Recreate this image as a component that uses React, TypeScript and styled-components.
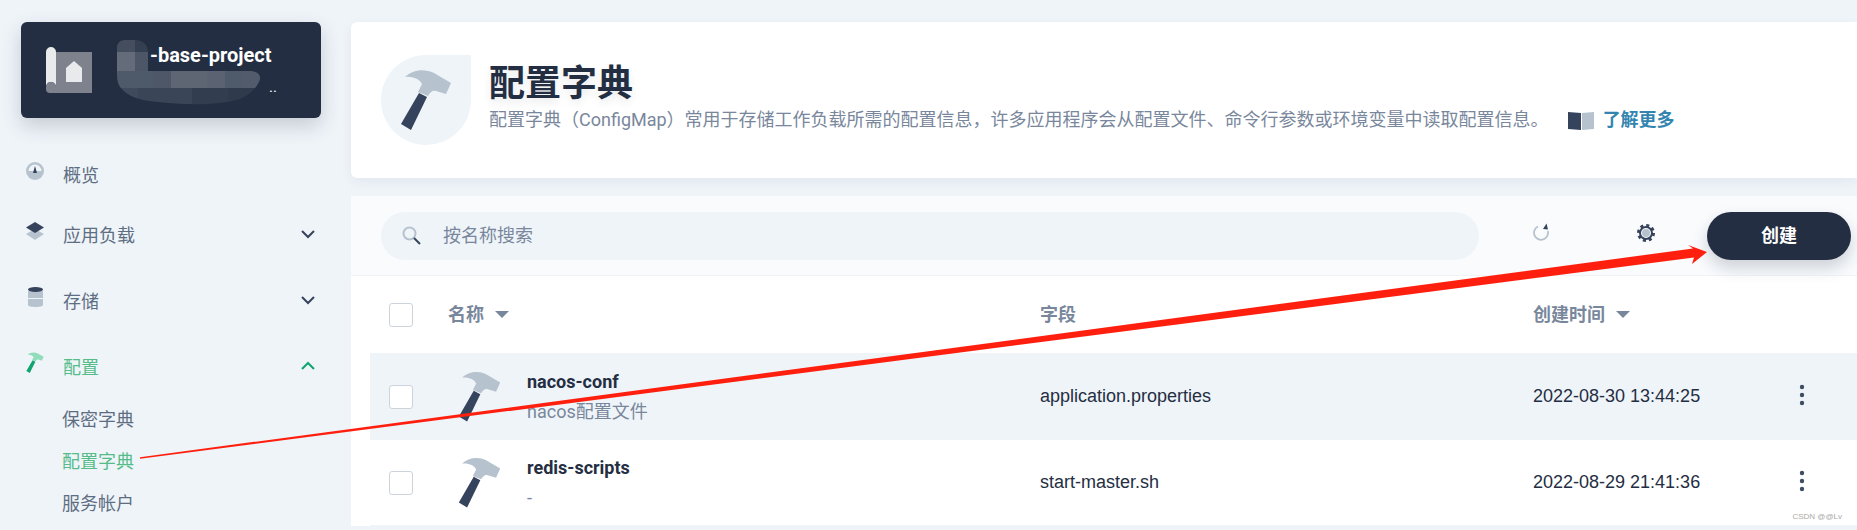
import { FC } from "react";
import styled, { createGlobalStyle } from "styled-components";

const CJK = `Roboto, "Noto Sans CJK SC", sans-serif`;
const ARIAL = `"Liberation Sans", "Noto Sans CJK SC", sans-serif`;

const Global = createGlobalStyle`
  html, body { margin: 0; padding: 0; background: #eff4f9; }
  body { width: 1857px; height: 530px; overflow: hidden; font-family: ${CJK}; }
  * { box-sizing: border-box; }
`;

const Page = styled.div`
  position: relative;
  display: flex;
  width: 1857px;
  height: 530px;
  overflow: hidden;
`;

const Sidebar = styled.aside`
  width: 351px;
  flex: none;
  padding: 22px 0 0 21px;
`;

const ProjectCard = styled.div`
  position: relative;
  display: flex;
  align-items: center;
  width: 300px;
  height: 96px;
  padding-left: 25px;
  border-radius: 6px;
  background: #242e42;
  box-shadow: 0 8px 20px rgba(36, 46, 66, 0.2);
`;

const ProjectText = styled.div`
  margin-left: 25px;
  color: #fff;
`;

const ProjectName = styled.div`
  margin-left: 33px;
  font-size: 20px;
  font-weight: 700;
  line-height: 24px;
  margin-top: -1px;
`;

const ProjectDesc = styled.div`
  margin-top: 10px;
  width: 160px;
  font-size: 15px;
  line-height: 20px;
  text-align: right;
`;

const Mosaic = styled.svg`
  position: absolute;
  left: 96px;
  top: 18px;
`;

const Nav = styled.nav`
  margin-top: 41px;
  margin-left: 5px;
`;

const NavItem = styled.div<{ $active?: boolean; $gap: number }>`
  display: flex;
  align-items: center;
  height: 30px;
  margin-bottom: ${(p) => p.$gap}px;
  padding-right: 35px;
  color: ${(p) => (p.$active ? "#55bc8a" : "#5e6e82")};
  font-size: 18px;
`;

const NavIcon = styled.span`
  display: flex;
  justify-content: center;
  width: 18px;
  margin-right: 19px;
  margin-top: -6px;
`;

const NavLabel = styled.span`
  flex: 1;
`;

const SubNav = styled.div`
  margin-top: 1px;
  margin-left: 36px;
`;

const SubItem = styled.div<{ $active?: boolean }>`
  height: 42px;
  line-height: 42px;
  color: ${(p) => (p.$active ? "#55bc8a" : "#5e6e82")};
  font-size: 18px;
`;

const Main = styled.main`
  flex: 1;
  padding-top: 22px;
  min-width: 0;
`;

const Banner = styled.section`
  display: flex;
  align-items: center;
  height: 156px;
  padding-left: 30px;
  border-radius: 6px 0 0 6px;
  background: #fff;
  box-shadow: 0 4px 12px rgba(36, 46, 66, 0.06);
`;

const BannerIcon = styled.div`
  display: flex;
  align-items: center;
  justify-content: center;
  width: 90px;
  height: 90px;
  margin-right: 18px;
  border-radius: 50% 0 50% 50%;
  background: #eff4f9;
`;

const Title = styled.h1`
  margin: -6px 0 0;
  color: #242e42;
  font-size: 36px;
  font-weight: 700;
  line-height: 46px;
  text-shadow: 0 4px 8px rgba(36, 46, 66, 0.1);
`;

const Desc = styled.div`
  display: flex;
  align-items: center;
  color: #79879c;
  font-size: 18px;
  line-height: 26px;
`;

const LearnMore = styled.a`
  display: flex;
  align-items: center;
  gap: 9px;
  margin-left: 19px;
  color: #3385b0;
  font-weight: 700;
`;

const Board = styled.section`
  margin-top: 18px;
  border-radius: 6px 0 0 0;
  background: #fff;
`;

const Toolbar = styled.div`
  display: flex;
  align-items: center;
  height: 80px;
  padding: 0 6px 0 30px;
  border-bottom: 1px solid #eff4f9;
  background: #f9fbfd;
`;

const Search = styled.div`
  display: flex;
  align-items: center;
  width: 1098px;
  height: 48px;
  padding-left: 21px;
  border-radius: 24px;
  background: #eff4f9;
  color: #79879c;
  font-size: 18px;
`;

const SearchIcon = styled.svg`
  margin-right: 22px;
`;

const SearchHint = styled.span`
  margin-top: -4px;
`;

const ToolIcon = styled.span<{ $left: number; $lift: number }>`
  display: flex;
  margin-left: ${(p) => p.$left}px;
  margin-bottom: ${(p) => p.$lift}px;
`;

const CreateButton = styled.button`
  width: 144px;
  height: 48px;
  margin-left: 52px;
  padding: 0 0 4px;
  border: 0;
  border-radius: 24px;
  background: #242e42;
  box-shadow: 0 8px 16px rgba(36, 46, 66, 0.2);
  color: #fff;
  font-family: ${CJK};
  font-size: 18px;
  font-weight: 700;
`;

const Table = styled.div`
  padding-left: 19px;
`;

const GridRow = styled.div`
  display: grid;
  grid-template-columns: 78px 592px 493px 269px 1fr;
  align-items: center;
`;

const HeadRow = styled(GridRow)`
  height: 77px;
  color: #79879c;
  font-size: 18px;
  font-weight: 700;
`;

const BodyRow = styled(GridRow)<{ $hover?: boolean }>`
  height: ${(p) => (p.$hover ? 87 : 86)}px;
  background: ${(p) => (p.$hover ? "#eff4f9" : "#fff")};
  border-bottom: ${(p) => (p.$hover ? "0" : "1px solid #eff4f9")};
`;

const Check = styled.span`
  display: block;
  width: 24px;
  height: 24px;
  margin-left: 19px;
  border: 1px solid #ccd3db;
  border-radius: 3px;
  background: #fff;
`;

const HeadCell = styled.span`
  display: inline-flex;
  align-items: center;
  gap: 11px;
  margin-top: -4px;
`;

const Caret = styled.i`
  width: 0;
  height: 0;
  margin-top: 4px;
  border-left: 7px solid transparent;
  border-right: 7px solid transparent;
  border-top: 7px solid #79879c;
`;

const NameCell = styled.div`
  display: flex;
  align-items: center;
  padding-left: 10px;
`;

const NameIcon = styled.span`
  display: flex;
  width: 69px;
`;

const RowName = styled.div`
  color: #242e42;
  font-size: 18px;
  font-weight: 700;
  line-height: 26px;
`;

const RowSub = styled.div`
  margin-top: 4px;
  color: #79879c;
  font-size: 18px;
  line-height: 26px;
`;

const PlainCell = styled.div`
  color: #242e42;
  font-family: ${ARIAL};
  font-size: 18px;
`;

const RowMenu = styled.div`
  display: flex;
  margin: -4px 0 0 -3px;
`;

const Overlay = styled.svg`
  position: absolute;
  left: 0;
  top: 0;
  pointer-events: none;
`;

const Watermark = styled.span`
  position: absolute;
  right: 15px;
  top: 512px;
  color: #a9a9a9;
  font-family: ${ARIAL};
  font-size: 8px;
`;

const Hammer: FC<{ size: number; head?: string; handle?: string }> = ({
  size,
  head = "#b6c2cd",
  handle = "#36435c",
}) => (
  <svg width={size} height={(size * 62) / 52} viewBox="20 14 52 62">
    <path
      d="M25 22C32 15 44 13 54 18L71 28L66 39L56 36C53 35 50 37 48 41L38 37L42 29C40 24 32 21 25 22Z"
      fill={head}
    />
    <path d="M39 38L47 42L31 75L21 69Z" fill={handle} />
  </svg>
);

const Chevron: FC<{ up?: boolean; color: string }> = ({ up, color }) => (
  <svg width="16" height="10" viewBox="0 0 16 10">
    <path
      d={up ? "M2 8L8 2L14 8" : "M2 2L8 8L14 2"}
      fill="none"
      stroke={color}
      strokeWidth="2"
    />
  </svg>
);

const Gauge = () => (
  <svg width="18" height="18" viewBox="0 0 18 18">
    <circle cx="9" cy="9" r="9" fill="#b6c2cd" />
    <path d="M2.500 9a6.500 6.500 0 0 1 13 0Z" fill="#eff4f9" />
    <path d="M9 4L11 11H7Z" fill="#36435c" />
  </svg>
);

const Layers = () => (
  <svg width="18" height="18" viewBox="0 0 18 18">
    <path d="M9 7L18 12L9 18L0 12Z" fill="#b6c2cd" />
    <path d="M9 0L18 5.500L9 11L0 5.500Z" fill="#36435c" />
  </svg>
);

const Database = () => (
  <svg width="15" height="20" viewBox="0 0 15 20">
    <path d="M0 12h15v6c0 2.600-15 2.600-15 0Z" fill="#b6c2cd" />
    <rect y="4" width="15" height="7" fill="#b6c2cd" />
    <ellipse cx="7.500" cy="2.500" rx="7.500" ry="2.500" fill="#36435c" />
  </svg>
);

const Book = () => (
  <svg width="26" height="19" viewBox="0 0 26 19">
    <path d="M0 1L13 2V19L0 18Z" fill="#36435c" />
    <path d="M14 2L26 1V18L14 19Z" fill="#b6c2cd" />
  </svg>
);

const Refresh = () => (
  <svg width="18" height="18" viewBox="0 0 18 18">
    <path d="M6 3.500A7 7 0 1 0 15.800 8" fill="none" stroke="#b6c2cd" strokeWidth="1.800" />
    <path d="M11 6L14.500 0.500L16 6.500Z" fill="#36435c" />
  </svg>
);

const Gear = () => (
  <svg width="18" height="18" viewBox="0 0 18 18">
    <circle cx="9" cy="9" r="7.500" fill="none" stroke="#36435c" strokeWidth="3" strokeDasharray="3 2.890" />
    <circle cx="9" cy="9" r="6" fill="none" stroke="#36435c" strokeWidth="2" />
    <circle cx="9" cy="9" r="4" fill="#b6c2cd" />
  </svg>
);

const Dots = () => (
  <svg width="6" height="22" viewBox="0 0 6 22">
    <circle cx="3" cy="3" r="2.200" fill="#3f4d63" />
    <circle cx="3" cy="11" r="2.200" fill="#3f4d63" />
    <circle cx="3" cy="19" r="2.200" fill="#3f4d63" />
  </svg>
);

const ProjectLogo = () => (
  <svg width="46" height="46" viewBox="0 0 46 46">
    <rect x="10" y="5" width="36" height="41" fill="#7d828d" />
    <path d="M0 5a5 5 0 0 1 10 0V40a5 5 0 0 0-10 0Z" fill="#e9eaec" />
    <path d="M0 40a5 5 0 0 1 10 0v6H4a4 4 0 0 1-4-4Z" fill="#7d828d" />
    <path d="M28 14L36 21V35H20V21Z" fill="#e9eaec" />
  </svg>
);

const mosaic: [number, number, number, number, string][] = [
  [0, 0, 18, 12, "#444e5e"],
  [18, 0, 13, 12, "#343f51"],
  [0, 12, 18, 19, "#656c79"],
  [18, 12, 13, 19, "#4d5667"],
  [0, 31, 36, 17, "#4e5969"],
  [36, 31, 18, 17, "#4d5768"],
  [54, 31, 36, 17, "#5e6674"],
  [90, 31, 18, 17, "#5b6372"],
  [108, 31, 18, 17, "#4f5a6a"],
  [126, 31, 19, 17, "#525b6b"],
  [0, 48, 21, 17, "#3f4a5c"],
  [21, 48, 54, 17, "#3a4558"],
  [75, 48, 36, 17, "#323d50"],
  [111, 48, 34, 17, "#2f3a4d"],
];

export default function App() {
  return (
    <Page>
      <Global />
      <Sidebar>
        <ProjectCard>
          <ProjectLogo />
          <ProjectText>
            <ProjectName>-base-project</ProjectName>
            <ProjectDesc>..</ProjectDesc>
          </ProjectText>
          <Mosaic width="145" height="66" viewBox="0 0 145 66">
            <defs>
              <clipPath id="smear">
                <path d="M8 0H18C27 0 31 6 31 12C31 22 34 31 42 31H132C142 31 145 36 142 42C136 54 124 60 110 62C84 66 60 64 40 62C20 60 0 54 0 36V8C0 3 3 0 8 0Z" />
              </clipPath>
            </defs>
            <g clipPath="url(#smear)">
              {mosaic.map(([x, y, w, h, fill], i) => (
                <rect key={i} x={x} y={y} width={w} height={h} fill={fill} />
              ))}
            </g>
          </Mosaic>
        </ProjectCard>
        <Nav>
          <NavItem $gap={30}>
            <NavIcon>
              <Gauge />
            </NavIcon>
            <NavLabel>概览</NavLabel>
          </NavItem>
          <NavItem $gap={36}>
            <NavIcon>
              <Layers />
            </NavIcon>
            <NavLabel>应用负载</NavLabel>
            <Chevron color="#36435c" />
          </NavItem>
          <NavItem $gap={36}>
            <NavIcon>
              <Database />
            </NavIcon>
            <NavLabel>存储</NavLabel>
            <Chevron color="#36435c" />
          </NavItem>
          <NavItem $active $gap={18}>
            <NavIcon>
              <Hammer size={18} head="#90dcbb" handle="#10a56f" />
            </NavIcon>
            <NavLabel>配置</NavLabel>
            <Chevron up color="#10a56f" />
          </NavItem>
          <SubNav>
            <SubItem>保密字典</SubItem>
            <SubItem $active>配置字典</SubItem>
            <SubItem>服务帐户</SubItem>
          </SubNav>
        </Nav>
      </Sidebar>
      <Main>
        <Banner>
          <BannerIcon>
            <Hammer size={52} />
          </BannerIcon>
          <div>
            <Title>配置字典</Title>
            <Desc>
              配置字典（ConfigMap）常用于存储工作负载所需的配置信息，许多应用程序会从配置文件、命令行参数或环境变量中读取配置信息。
              <LearnMore>
                <Book />
                了解更多
              </LearnMore>
            </Desc>
          </div>
        </Banner>
        <Board>
          <Toolbar>
            <Search>
              <SearchIcon width="19" height="19" viewBox="0 0 19 19">
                <circle cx="7.500" cy="7.500" r="6" fill="none" stroke="#b6c2cd" strokeWidth="2" />
                <path d="M12 12L18 18" stroke="#36435c" strokeWidth="2" />
              </SearchIcon>
              <SearchHint>按名称搜索</SearchHint>
            </Search>
            <ToolIcon $left={53} $lift={8}>
              <Refresh />
            </ToolIcon>
            <ToolIcon $left={87} $lift={6}>
              <Gear />
            </ToolIcon>
            <CreateButton>创建</CreateButton>
          </Toolbar>
          <Table>
            <HeadRow>
              <Check />
              <HeadCell>
                名称
                <Caret />
              </HeadCell>
              <HeadCell>字段</HeadCell>
              <HeadCell>
                创建时间
                <Caret />
              </HeadCell>
            </HeadRow>
            <BodyRow $hover>
              <Check />
              <NameCell>
                <NameIcon>
                  <Hammer size={43} />
                </NameIcon>
                <div>
                  <RowName>nacos-conf</RowName>
                  <RowSub>nacos配置文件</RowSub>
                </div>
              </NameCell>
              <PlainCell>application.properties</PlainCell>
              <PlainCell>2022-08-30 13:44:25</PlainCell>
              <RowMenu>
                <Dots />
              </RowMenu>
            </BodyRow>
            <BodyRow>
              <Check />
              <NameCell>
                <NameIcon>
                  <Hammer size={43} />
                </NameIcon>
                <div>
                  <RowName>redis-scripts</RowName>
                  <RowSub>-</RowSub>
                </div>
              </NameCell>
              <PlainCell>start-master.sh</PlainCell>
              <PlainCell>2022-08-29 21:41:36</PlainCell>
              <RowMenu>
                <Dots />
              </RowMenu>
            </BodyRow>
          </Table>
        </Board>
      </Main>
      <Overlay width="1857" height="530" viewBox="0 0 1857 530">
        <path
          d="M140 457.200L1693 248.500L1688 245L1707 252L1692 264L1694 257.500L140 458.800Z"
          fill="#ff1f0f"
        />
      </Overlay>
      <Watermark>CSDN @@Lv</Watermark>
    </Page>
  );
}
